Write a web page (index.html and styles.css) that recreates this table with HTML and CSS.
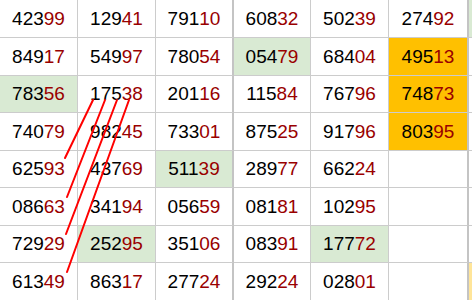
FILE: index.html
```html
<!DOCTYPE html>
<html>
<head>
<meta charset="utf-8">
<link rel="stylesheet" href="styles.css">
</head>
<body>
<div class="sheet">
  <div class="grid">
    <div class="c">423<b>99</b></div><div class="c">129<b>41</b></div><div class="c t">791<b>10</b></div><div class="c">608<b>32</b></div><div class="c">502<b>39</b></div><div class="c t">274<b>92</b></div><div class="c e g"></div>
    <div class="c">849<b>17</b></div><div class="c">549<b>97</b></div><div class="c t">780<b>54</b></div><div class="c g">054<b>79</b></div><div class="c">684<b>04</b></div><div class="c t o">495<b>13</b></div><div class="c e"></div>
    <div class="c g">783<b>56</b></div><div class="c">175<b>38</b></div><div class="c t">201<b>16</b></div><div class="c">115<b>84</b></div><div class="c">767<b>96</b></div><div class="c t o">748<b>73</b></div><div class="c e"></div>
    <div class="c">740<b>79</b></div><div class="c">982<b>45</b></div><div class="c t">733<b>01</b></div><div class="c">875<b>25</b></div><div class="c">917<b>96</b></div><div class="c t o">803<b>95</b></div><div class="c e"></div>
    <div class="c">625<b>93</b></div><div class="c">437<b>69</b></div><div class="c t g">511<b>39</b></div><div class="c">289<b>77</b></div><div class="c">662<b>24</b></div><div class="c t"></div><div class="c e"></div>
    <div class="c">086<b>63</b></div><div class="c">341<b>94</b></div><div class="c t">056<b>59</b></div><div class="c">081<b>81</b></div><div class="c">102<b>95</b></div><div class="c t"></div><div class="c e"></div>
    <div class="c">729<b>29</b></div><div class="c g">252<b>95</b></div><div class="c t">351<b>06</b></div><div class="c">083<b>91</b></div><div class="c g">177<b>72</b></div><div class="c t"></div><div class="c e"></div>
    <div class="c">613<b>49</b></div><div class="c">863<b>17</b></div><div class="c t">277<b>24</b></div><div class="c">292<b>24</b></div><div class="c">028<b>01</b></div><div class="c t"></div><div class="c e y"></div>
  </div>
  <svg class="lines" width="472" height="300" viewBox="0 0 472 300">
    <g stroke="#ff0000" stroke-width="2" stroke-linecap="round" fill="none">
      <line x1="93" y1="100" x2="65" y2="158"/>
      <line x1="105" y1="100" x2="67" y2="197"/>
      <line x1="117" y1="100" x2="66" y2="234"/>
      <line x1="129" y1="100" x2="67" y2="272"/>
    </g>
  </svg>
</div>
</body>
</html>
```
FILE: styles.css
```css
html, body {
  margin: 0;
  padding: 0;
  background: #ffffff;
}
.sheet {
  position: relative;
  width: 472px;
  height: 300px;
  overflow: hidden;
}
.grid {
  display: grid;
  grid-template-columns: 78px 78px 78px 77px 78px 80px 10px;
  grid-template-rows: 38px 38px 37px 38px 37px 38px 37px 38px;
  font-family: "Liberation Sans", Arial, sans-serif;
  font-size: 19px;
  color: #000000;
}
.c {
  box-sizing: border-box;
  border-right: 1px solid #cccccc;
  border-bottom: 1px solid #cccccc;
  display: flex;
  align-items: center;
  justify-content: center;
  background: #ffffff;
}
.c b {
  font-weight: normal;
  color: #990000;
}
.t {
  border-right: 2px solid #c4c4c4;
}
.g {
  background: #d9ead3;
}
.o {
  background: #ffc000;
}
.y {
  background: #ffe599;
}
.lines {
  position: absolute;
  left: 0;
  top: 0;
  pointer-events: none;
}
```
